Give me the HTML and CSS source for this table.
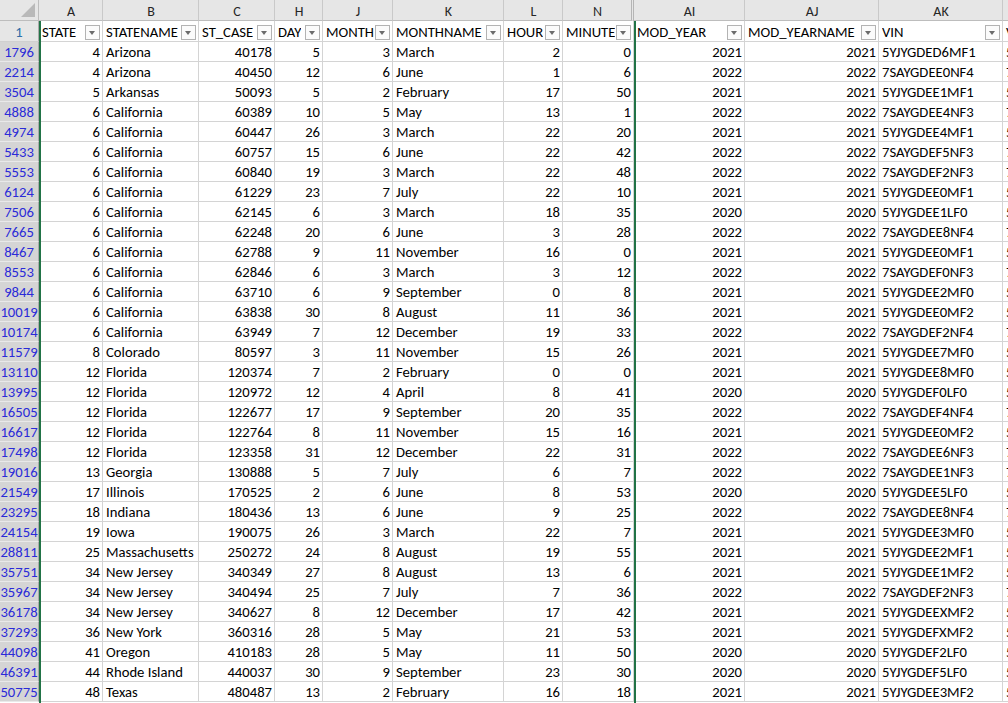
FILE: index.html
```html
<!DOCTYPE html>
<html lang="en">
<head>
<meta charset="utf-8">
<title>Sheet</title>
<link rel="stylesheet" href="styles.css">
</head>
<body>
<div class="sheet">
  <div class="row colhead">
    <div class="c corner"><svg class="tri" width="14" height="14" viewBox="0 0 14 14"><polygon points="14,0 14,14 0,14" fill="#b9b9b9"/></svg></div>
    <div class="c">A</div><div class="c">B</div><div class="c">C</div><div class="c">H</div><div class="c">J</div><div class="c">K</div><div class="c">L</div><div class="c hid">N</div><div class="c">AI</div><div class="c">AJ</div><div class="c">AK</div><div class="c">AL</div>
  </div>
  <div class="row head">
    <div class="c rh">1</div>
    <div class="c f"><span>STATE</span><span class="fb"></span></div>
    <div class="c f"><span>STATENAME</span><span class="fb"></span></div>
    <div class="c f"><span>ST_CASE</span><span class="fb"></span></div>
    <div class="c f"><span>DAY</span><span class="fb"></span></div>
    <div class="c f"><span>MONTH</span><span class="fb"></span></div>
    <div class="c f"><span>MONTHNAME</span><span class="fb"></span></div>
    <div class="c f"><span>HOUR</span><span class="fb"></span></div>
    <div class="c f"><span>MINUTE</span><span class="fb"></span></div>
    <div class="c f"><span>MOD_YEAR</span><span class="fb"></span></div>
    <div class="c f"><span>MOD_YEARNAME</span><span class="fb"></span></div>
    <div class="c f"><span>VIN</span><span class="fb"></span></div>
    <div class="c">VIN</div>
  </div>

  <div class="row"><div class="c rh">1796</div><div class="c n">4</div><div class="c">Arizona</div><div class="c n">40178</div><div class="c n">5</div><div class="c n">3</div><div class="c">March</div><div class="c n">2</div><div class="c n">0</div><div class="c n">2021</div><div class="c n">2021</div><div class="c">5YJYGDED6MF1</div><div class="c">5YJ</div></div>
  <div class="row"><div class="c rh">2214</div><div class="c n">4</div><div class="c">Arizona</div><div class="c n">40450</div><div class="c n">12</div><div class="c n">6</div><div class="c">June</div><div class="c n">1</div><div class="c n">6</div><div class="c n">2022</div><div class="c n">2022</div><div class="c">7SAYGDEE0NF4</div><div class="c">7SA</div></div>
  <div class="row"><div class="c rh">3504</div><div class="c n">5</div><div class="c">Arkansas</div><div class="c n">50093</div><div class="c n">5</div><div class="c n">2</div><div class="c">February</div><div class="c n">17</div><div class="c n">50</div><div class="c n">2021</div><div class="c n">2021</div><div class="c">5YJYGDEE1MF1</div><div class="c">5YJ</div></div>
  <div class="row"><div class="c rh">4888</div><div class="c n">6</div><div class="c">California</div><div class="c n">60389</div><div class="c n">10</div><div class="c n">5</div><div class="c">May</div><div class="c n">13</div><div class="c n">1</div><div class="c n">2022</div><div class="c n">2022</div><div class="c">7SAYGDEE4NF3</div><div class="c">7SA</div></div>
  <div class="row"><div class="c rh">4974</div><div class="c n">6</div><div class="c">California</div><div class="c n">60447</div><div class="c n">26</div><div class="c n">3</div><div class="c">March</div><div class="c n">22</div><div class="c n">20</div><div class="c n">2021</div><div class="c n">2021</div><div class="c">5YJYGDEE4MF1</div><div class="c">5YJ</div></div>
  <div class="row"><div class="c rh">5433</div><div class="c n">6</div><div class="c">California</div><div class="c n">60757</div><div class="c n">15</div><div class="c n">6</div><div class="c">June</div><div class="c n">22</div><div class="c n">42</div><div class="c n">2022</div><div class="c n">2022</div><div class="c">7SAYGDEF5NF3</div><div class="c">7SA</div></div>
  <div class="row"><div class="c rh">5553</div><div class="c n">6</div><div class="c">California</div><div class="c n">60840</div><div class="c n">19</div><div class="c n">3</div><div class="c">March</div><div class="c n">22</div><div class="c n">48</div><div class="c n">2022</div><div class="c n">2022</div><div class="c">7SAYGDEF2NF3</div><div class="c">7SA</div></div>
  <div class="row"><div class="c rh">6124</div><div class="c n">6</div><div class="c">California</div><div class="c n">61229</div><div class="c n">23</div><div class="c n">7</div><div class="c">July</div><div class="c n">22</div><div class="c n">10</div><div class="c n">2021</div><div class="c n">2021</div><div class="c">5YJYGDEE0MF1</div><div class="c">5YJ</div></div>
  <div class="row"><div class="c rh">7506</div><div class="c n">6</div><div class="c">California</div><div class="c n">62145</div><div class="c n">6</div><div class="c n">3</div><div class="c">March</div><div class="c n">18</div><div class="c n">35</div><div class="c n">2020</div><div class="c n">2020</div><div class="c">5YJYGDEE1LF0</div><div class="c">5YJ</div></div>
  <div class="row"><div class="c rh">7665</div><div class="c n">6</div><div class="c">California</div><div class="c n">62248</div><div class="c n">20</div><div class="c n">6</div><div class="c">June</div><div class="c n">3</div><div class="c n">28</div><div class="c n">2022</div><div class="c n">2022</div><div class="c">7SAYGDEE8NF4</div><div class="c">7SA</div></div>
  <div class="row"><div class="c rh">8467</div><div class="c n">6</div><div class="c">California</div><div class="c n">62788</div><div class="c n">9</div><div class="c n">11</div><div class="c">November</div><div class="c n">16</div><div class="c n">0</div><div class="c n">2021</div><div class="c n">2021</div><div class="c">5YJYGDEE0MF1</div><div class="c">5YJ</div></div>
  <div class="row"><div class="c rh">8553</div><div class="c n">6</div><div class="c">California</div><div class="c n">62846</div><div class="c n">6</div><div class="c n">3</div><div class="c">March</div><div class="c n">3</div><div class="c n">12</div><div class="c n">2022</div><div class="c n">2022</div><div class="c">7SAYGDEF0NF3</div><div class="c">7SA</div></div>
  <div class="row"><div class="c rh">9844</div><div class="c n">6</div><div class="c">California</div><div class="c n">63710</div><div class="c n">6</div><div class="c n">9</div><div class="c">September</div><div class="c n">0</div><div class="c n">8</div><div class="c n">2021</div><div class="c n">2021</div><div class="c">5YJYGDEE2MF0</div><div class="c">5YJ</div></div>
  <div class="row"><div class="c rh">10019</div><div class="c n">6</div><div class="c">California</div><div class="c n">63838</div><div class="c n">30</div><div class="c n">8</div><div class="c">August</div><div class="c n">11</div><div class="c n">36</div><div class="c n">2021</div><div class="c n">2021</div><div class="c">5YJYGDEE0MF2</div><div class="c">5YJ</div></div>
  <div class="row"><div class="c rh">10174</div><div class="c n">6</div><div class="c">California</div><div class="c n">63949</div><div class="c n">7</div><div class="c n">12</div><div class="c">December</div><div class="c n">19</div><div class="c n">33</div><div class="c n">2022</div><div class="c n">2022</div><div class="c">7SAYGDEF2NF4</div><div class="c">7SA</div></div>
  <div class="row"><div class="c rh">11579</div><div class="c n">8</div><div class="c">Colorado</div><div class="c n">80597</div><div class="c n">3</div><div class="c n">11</div><div class="c">November</div><div class="c n">15</div><div class="c n">26</div><div class="c n">2021</div><div class="c n">2021</div><div class="c">5YJYGDEE7MF0</div><div class="c">5YJ</div></div>
  <div class="row"><div class="c rh">13110</div><div class="c n">12</div><div class="c">Florida</div><div class="c n">120374</div><div class="c n">7</div><div class="c n">2</div><div class="c">February</div><div class="c n">0</div><div class="c n">0</div><div class="c n">2021</div><div class="c n">2021</div><div class="c">5YJYGDEE8MF0</div><div class="c">5YJ</div></div>
  <div class="row"><div class="c rh">13995</div><div class="c n">12</div><div class="c">Florida</div><div class="c n">120972</div><div class="c n">12</div><div class="c n">4</div><div class="c">April</div><div class="c n">8</div><div class="c n">41</div><div class="c n">2020</div><div class="c n">2020</div><div class="c">5YJYGDEF0LF0</div><div class="c">5YJ</div></div>
  <div class="row"><div class="c rh">16505</div><div class="c n">12</div><div class="c">Florida</div><div class="c n">122677</div><div class="c n">17</div><div class="c n">9</div><div class="c">September</div><div class="c n">20</div><div class="c n">35</div><div class="c n">2022</div><div class="c n">2022</div><div class="c">7SAYGDEF4NF4</div><div class="c">7SA</div></div>
  <div class="row"><div class="c rh">16617</div><div class="c n">12</div><div class="c">Florida</div><div class="c n">122764</div><div class="c n">8</div><div class="c n">11</div><div class="c">November</div><div class="c n">15</div><div class="c n">16</div><div class="c n">2021</div><div class="c n">2021</div><div class="c">5YJYGDEE0MF2</div><div class="c">5YJ</div></div>
  <div class="row"><div class="c rh">17498</div><div class="c n">12</div><div class="c">Florida</div><div class="c n">123358</div><div class="c n">31</div><div class="c n">12</div><div class="c">December</div><div class="c n">22</div><div class="c n">31</div><div class="c n">2022</div><div class="c n">2022</div><div class="c">7SAYGDEE6NF3</div><div class="c">7SA</div></div>
  <div class="row"><div class="c rh">19016</div><div class="c n">13</div><div class="c">Georgia</div><div class="c n">130888</div><div class="c n">5</div><div class="c n">7</div><div class="c">July</div><div class="c n">6</div><div class="c n">7</div><div class="c n">2022</div><div class="c n">2022</div><div class="c">7SAYGDEE1NF3</div><div class="c">7SA</div></div>
  <div class="row"><div class="c rh">21549</div><div class="c n">17</div><div class="c">Illinois</div><div class="c n">170525</div><div class="c n">2</div><div class="c n">6</div><div class="c">June</div><div class="c n">8</div><div class="c n">53</div><div class="c n">2020</div><div class="c n">2020</div><div class="c">5YJYGDEE5LF0</div><div class="c">5YJ</div></div>
  <div class="row"><div class="c rh">23295</div><div class="c n">18</div><div class="c">Indiana</div><div class="c n">180436</div><div class="c n">13</div><div class="c n">6</div><div class="c">June</div><div class="c n">9</div><div class="c n">25</div><div class="c n">2022</div><div class="c n">2022</div><div class="c">7SAYGDEE8NF4</div><div class="c">7SA</div></div>
  <div class="row"><div class="c rh">24154</div><div class="c n">19</div><div class="c">Iowa</div><div class="c n">190075</div><div class="c n">26</div><div class="c n">3</div><div class="c">March</div><div class="c n">22</div><div class="c n">7</div><div class="c n">2021</div><div class="c n">2021</div><div class="c">5YJYGDEE3MF0</div><div class="c">5YJ</div></div>
  <div class="row"><div class="c rh">28811</div><div class="c n">25</div><div class="c">Massachusetts</div><div class="c n">250272</div><div class="c n">24</div><div class="c n">8</div><div class="c">August</div><div class="c n">19</div><div class="c n">55</div><div class="c n">2021</div><div class="c n">2021</div><div class="c">5YJYGDEE2MF1</div><div class="c">5YJ</div></div>
  <div class="row"><div class="c rh">35751</div><div class="c n">34</div><div class="c">New Jersey</div><div class="c n">340349</div><div class="c n">27</div><div class="c n">8</div><div class="c">August</div><div class="c n">13</div><div class="c n">6</div><div class="c n">2021</div><div class="c n">2021</div><div class="c">5YJYGDEE1MF2</div><div class="c">5YJ</div></div>
  <div class="row"><div class="c rh">35967</div><div class="c n">34</div><div class="c">New Jersey</div><div class="c n">340494</div><div class="c n">25</div><div class="c n">7</div><div class="c">July</div><div class="c n">7</div><div class="c n">36</div><div class="c n">2022</div><div class="c n">2022</div><div class="c">7SAYGDEF2NF3</div><div class="c">7SA</div></div>
  <div class="row"><div class="c rh">36178</div><div class="c n">34</div><div class="c">New Jersey</div><div class="c n">340627</div><div class="c n">8</div><div class="c n">12</div><div class="c">December</div><div class="c n">17</div><div class="c n">42</div><div class="c n">2021</div><div class="c n">2021</div><div class="c">5YJYGDEEXMF2</div><div class="c">5YJ</div></div>
  <div class="row"><div class="c rh">37293</div><div class="c n">36</div><div class="c">New York</div><div class="c n">360316</div><div class="c n">28</div><div class="c n">5</div><div class="c">May</div><div class="c n">21</div><div class="c n">53</div><div class="c n">2021</div><div class="c n">2021</div><div class="c">5YJYGDEFXMF2</div><div class="c">5YJ</div></div>
  <div class="row"><div class="c rh">44098</div><div class="c n">41</div><div class="c">Oregon</div><div class="c n">410183</div><div class="c n">28</div><div class="c n">5</div><div class="c">May</div><div class="c n">11</div><div class="c n">50</div><div class="c n">2020</div><div class="c n">2020</div><div class="c">5YJYGDEF2LF0</div><div class="c">5YJ</div></div>
  <div class="row"><div class="c rh">46391</div><div class="c n">44</div><div class="c">Rhode Island</div><div class="c n">440037</div><div class="c n">30</div><div class="c n">9</div><div class="c">September</div><div class="c n">23</div><div class="c n">30</div><div class="c n">2020</div><div class="c n">2020</div><div class="c">5YJYGDEF5LF0</div><div class="c">5YJ</div></div>
  <div class="row"><div class="c rh">50775</div><div class="c n">48</div><div class="c">Texas</div><div class="c n">480487</div><div class="c n">13</div><div class="c n">2</div><div class="c">February</div><div class="c n">16</div><div class="c n">18</div><div class="c n">2021</div><div class="c n">2021</div><div class="c">5YJYGDEE3MF2</div><div class="c">5YJ</div></div>

  <div class="sel"></div>
</div>
</body>
</html>
```

FILE: styles.css
```css
html, body {
  margin: 0;
  padding: 0;
  background: #ffffff;
  overflow: hidden;
}

body {
  font-family: "Carlito", "Calibri", "Lato", sans-serif;
  font-size: 14.67px;
  color: #000000;
}

.sheet {
  position: relative;
  width: 1008px;
  height: 703px;
  overflow: hidden;
}

.row {
  display: grid;
  grid-template-columns: 39px 64px 96px 76px 48px 70px 111px 59px 71px 111px 134px 124px 40px;
  height: 20px;
}

.row.colhead,
.row.head {
  height: 21px;
}

.c {
  box-sizing: border-box;
  border-right: 1px solid #d4d4d4;
  border-bottom: 1px solid #d4d4d4;
  padding: 1px 2px 0 3px;
  line-height: 19px;
  white-space: nowrap;
  overflow: hidden;
}

.colhead .c,
.head .c {
  padding-top: 2px;
}

.n {
  text-align: right;
}

/* column letters */
.colhead .c {
  background: #e6e6e6;
  color: #262626;
  font-size: 14px;
  text-align: center;
  border-right-color: #c9c9c9;
  border-bottom-color: #bdbdbd;
}

.colhead .hid {
  border-right: 3px double #b5b5b5;
}

.colhead .corner {
  position: relative;
  padding: 0;
  border-right-color: #bdbdbd;
}

.tri {
  position: absolute;
  right: 3px;
  bottom: 3px;
}

/* row numbers */
.rh {
  background: #d5d5d5;
  color: #2b2bd8;
  text-align: center;
  padding-left: 0;
  padding-right: 0;
  border-right-color: #a9a9a9;
  border-bottom-color: #e9e9e9;
}

.head .rh {
  background: #e6e6e6;
  color: #2f6ea8;
  border-bottom-color: #d0d0d0;
}

/* filter header cells */
.f {
  display: flex;
  align-items: flex-start;
  justify-content: space-between;
  padding-right: 2px;
}

.f > span:first-child {
  overflow: hidden;
}

.fb {
  flex: none;
  box-sizing: border-box;
  width: 15px;
  height: 15px;
  margin-top: 2px;
  border: 1px solid #b3b3b3;
  background: #fbfbfb;
  position: relative;
}

.fb::after {
  content: "";
  position: absolute;
  left: 3px;
  top: 5px;
  border-left: 3.5px solid transparent;
  border-right: 3.5px solid transparent;
  border-top: 4px solid #6b6b6b;
}

/* selection border of columns A:N */
.sel {
  position: absolute;
  left: 39px;
  top: 21px;
  width: 597px;
  bottom: 0;
  box-sizing: border-box;
  border-left: 2px solid #217346;
  border-right: 2px solid #217346;
  pointer-events: none;
}
```
